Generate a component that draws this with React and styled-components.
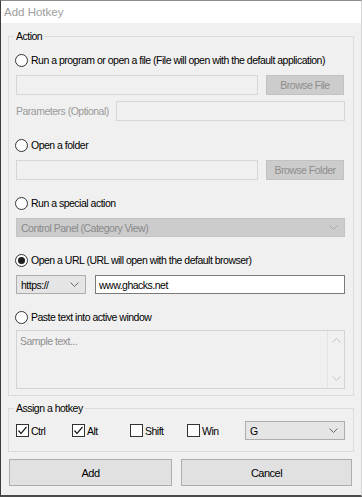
import React from "react";
import styled, { createGlobalStyle } from "styled-components";

const GlobalStyle = createGlobalStyle`
  html, body {
    margin: 0;
    padding: 0;
    background: #ffffff;
  }
  body {
    font-family: "Liberation Sans", Arial, sans-serif;
    font-size: 10.5px;
    letter-spacing: -0.5px;
    color: #000;
  }
  * {
    box-sizing: border-box;
  }
`;

const Window = styled.div`
  width: 362px;
  height: 497px;
  display: flex;
  flex-direction: column;
  background: #f0f0f0;
  border-top: 1px solid #8c8c8c;
  border-left: 1px solid #3c3c3c;
  border-right: 1px solid #d4d4d4;
  border-bottom: 2px solid #4a4a4a;
`;

const TitleBar = styled.div`
  height: 22px;
  display: flex;
  align-items: center;
  padding-left: 3px;
  background: #ffffff;
  color: #9d9d9d;
  font-size: 11.5px;
  letter-spacing: 0;
`;

const Body = styled.div`
  flex: 1;
  padding: 6px 7px 0 7px;
`;

const Group = styled.fieldset`
  margin: ${p => p.$mt || 0}px 0 0;
  padding: 0 8px ${p => p.$pb || 0}px 7px;
  border: 1px solid #dcdcdc;
  min-width: 0;
`;

const Legend = styled.legend`
  padding: 0 2px;
  margin-left: -2px;
  line-height: 14px;
`;

const Row = styled.div`
  display: flex;
  align-items: center;
  gap: ${p => (p.$gap === undefined ? 8 : p.$gap)}px;
  margin-top: ${p => p.$mt || 0}px;
  height: ${p => p.$h || 20}px;
`;

const RadioLabel = styled.label`
  display: flex;
  align-items: center;
  gap: 3px;
  height: 16px;
  margin-top: ${p => p.$mt || 0}px;
  margin-left: -1px;
  white-space: nowrap;
`;

const RadioCircle = styled.span`
  flex: none;
  width: 13px;
  height: 13px;
  border: 1px solid #333;
  border-radius: 50%;
  background: #fff;
  display: flex;
  align-items: center;
  justify-content: center;

  &::after {
    content: "";
    width: 7px;
    height: 7px;
    border-radius: 50%;
    background: #1e1e1e;
    display: ${p => (p.$checked ? "block" : "none")};
  }
`;

const TextBox = styled.div`
  flex: ${p => (p.$w ? "none" : 1)};
  width: ${p => (p.$w ? `${p.$w}px` : "auto")};
  height: 100%;
  display: flex;
  align-items: center;
  padding-left: 3px;
  border: 1px solid ${p => (p.$enabled ? "#7a7a7a" : "#d6d6d6")};
  background: ${p => (p.$enabled ? "#ffffff" : "#f0f0f0")};
`;

const PushButton = styled.div`
  flex: none;
  width: ${p => p.$w || 78}px;
  height: 100%;
  display: flex;
  align-items: center;
  justify-content: center;
  background: #cccccc;
  border: 1px solid #c2c2c2;
  color: #8e8e8e;
`;

const FieldLabel = styled.span`
  color: #9a9a9a;
  white-space: nowrap;
  width: 92px;
  flex: none;
`;

const Select = styled.div`
  flex: ${p => (p.$w ? "none" : 1)};
  width: ${p => (p.$w ? `${p.$w}px` : "auto")};
  height: 100%;
  display: flex;
  align-items: center;
  justify-content: space-between;
  padding: 0 6px 0 4px;
  background: ${p => (p.$disabled ? "#cccccc" : "#e5e5e5")};
  border: 1px solid ${p => (p.$disabled ? "#c4c4c4" : "#adadad")};
  color: ${p => (p.$disabled ? "#8a8a8a" : "#000")};
`;

const TextArea = styled.div`
  margin-top: 5px;
  height: 59px;
  display: flex;
  border: 1px solid #d3d3d3;
  background: #f0f0f0;
`;

const Placeholder = styled.div`
  flex: 1;
  padding: 4px 3px;
  color: #8f8f8f;
`;

const ScrollBar = styled.div`
  width: 17px;
  display: flex;
  flex-direction: column;
  justify-content: space-between;
  align-items: center;
  padding: 6px 0 6px;
  border-left: 1px solid #e4e4e4;
`;

const CheckItem = styled.label`
  flex: none;
  width: ${p => p.$w}px;
  display: flex;
  align-items: center;
  gap: 2px;
`;

const CheckBox = styled.span`
  flex: none;
  width: 13px;
  height: 13px;
  border: 1px solid #333;
  background: #fff;
  display: flex;
  align-items: center;
  justify-content: center;
`;

const ButtonRow = styled.div`
  display: grid;
  grid-template-columns: 163px 1fr;
  gap: 9px;
  height: 27px;
  margin: 7px 2px 0 1px;
`;

const DialogButton = styled.div`
  display: flex;
  align-items: center;
  justify-content: center;
  background: #e1e1e1;
  border: 1px solid #adadad;
  font-size: 11px;
`;

const Chevron = ({ color = "#555", dir = "down" }) => (
  <svg width="9" height="6" viewBox="0 0 9 6">
    <polyline
      points={dir === "down" ? "0.5,0.5 4.5,4.5 8.5,0.5" : "0.5,5.5 4.5,1.5 8.5,5.5"}
      fill="none"
      stroke={color}
      strokeWidth="1"
    />
  </svg>
);

const Check = () => (
  <svg width="11" height="11" viewBox="0 0 11 11">
    <polyline points="1.5,5.5 4,8.5 9.5,2" fill="none" stroke="#222" strokeWidth="1.2" />
  </svg>
);

const Radio = ({ mt, checked, children }) => (
  <RadioLabel $mt={mt}>
    <RadioCircle $checked={checked} />
    {children}
  </RadioLabel>
);

const modifiers = [
  { label: "Ctrl", w: 56, on: true },
  { label: "Alt", w: 58, on: true },
  { label: "Shift", w: 57, on: false },
  { label: "Win", w: 58, on: false },
];

export default function App() {
  return (
    <>
      <GlobalStyle />
      <Window>
        <TitleBar>Add Hotkey</TitleBar>
        <Body>
          <Group $pb={6}>
            <Legend>Action</Legend>
            <Radio mt={9}>
              Run a program or open a file (File will open with the default application)
            </Radio>
            <Row $mt={7}>
              <TextBox $w={242} />
              <PushButton>Browse File</PushButton>
            </Row>
            <Row $mt={6}>
              <FieldLabel>Parameters (Optional)</FieldLabel>
              <TextBox />
            </Row>
            <Radio mt={16}>Open a folder</Radio>
            <Row $mt={7}>
              <TextBox $w={242} />
              <PushButton>Browse Folder</PushButton>
            </Row>
            <Radio mt={15}>Run a special action</Radio>
            <Row $mt={7} $h={19}>
              <Select $disabled>
                <span>Control Panel (Category View)</span>
                <Chevron color="#a8a8a8" />
              </Select>
            </Row>
            <Radio mt={15} checked>
              Open a URL (URL will open with the default browser)
            </Radio>
            <Row $mt={7} $h={19} $gap={9}>
              <Select $w={70}>
                <span>https://</span>
                <Chevron color="#666" />
              </Select>
              <TextBox $enabled>www.ghacks.net</TextBox>
            </Row>
            <Radio mt={15}>Paste text into active window</Radio>
            <TextArea>
              <Placeholder>Sample text...</Placeholder>
              <ScrollBar>
                <Chevron color="#c4c4c4" dir="up" />
                <Chevron color="#c4c4c4" />
              </ScrollBar>
            </TextArea>
          </Group>

          <Group $mt={5} $pb={11}>
            <Legend>Assign a hotkey</Legend>
            <Row $mt={6} $h={19} $gap={0}>
              {modifiers.map(m => (
                <CheckItem key={m.label} $w={m.w}>
                  <CheckBox>{m.on && <Check />}</CheckBox>
                  {m.label}
                </CheckItem>
              ))}
              <Select>
                <span>G</span>
                <Chevron color="#666" />
              </Select>
            </Row>
          </Group>

          <ButtonRow>
            <DialogButton>Add</DialogButton>
            <DialogButton>Cancel</DialogButton>
          </ButtonRow>
        </Body>
      </Window>
    </>
  );
}
